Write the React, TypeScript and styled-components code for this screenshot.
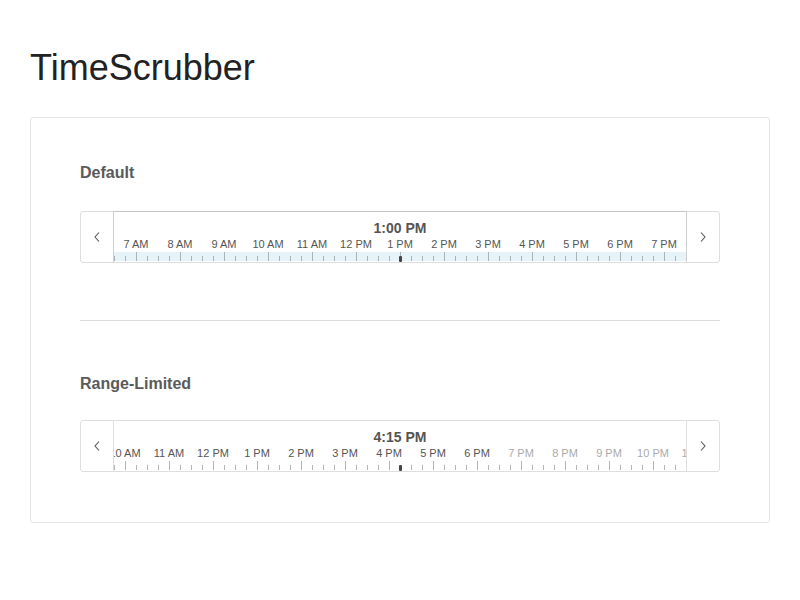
import React from "react";
import styled, {createGlobalStyle} from "styled-components";

const GlobalStyle = createGlobalStyle`
  body {
    margin: 0;
    background: #fff;
    font-family: "Liberation Sans", Arial, sans-serif;
  }
`;

const Page = styled.div`
  width: 800px;
  padding: 48px 30px 0 30px;
  box-sizing: border-box;
`;

const Title = styled.h1`
  margin: 0 0 29px 0;
  font-size: 36px;
  line-height: 40px;
  font-weight: 400;
  color: #222;
`;

const Card = styled.div`
  border: 1px solid #e6e6e6;
  border-radius: 3px;
  padding: 45px 49px 50px 49px;
  display: flex;
  flex-direction: column;
`;

interface SectionHeadingProps {
    $gap?: number;
}

const SectionHeading = styled.div<SectionHeadingProps>`
  font-size: 16px;
  line-height: 20px;
  font-weight: 700;
  color: #5a5a5a;
  margin-bottom: ${p => p.$gap ?? 28}px;
`;

const Divider = styled.div`
  height: 1px;
  background: #dcdcdc;
  margin: 57px 0 53px 0;
`;

const Scrubber = styled.div`
  display: flex;
  height: 52px;
  box-sizing: border-box;
  border: 1px solid #dedede;
  border-radius: 3px;
  background: #fff;
`;

const NavButton = styled.div`
  width: 32px;
  flex: none;
  display: flex;
  align-items: center;
  justify-content: center;
`;

interface TrackProps {
    $active?: boolean;
}

const Track = styled.div<TrackProps>`
  flex: 1;
  position: relative;
  overflow: hidden;
  display: flex;
  flex-direction: column;
  border-left: 1px solid ${p => p.$active ? "#cfcfcf" : "#dedede"};
  border-right: 1px solid ${p => p.$active ? "#cfcfcf" : "#dedede"};
  border-top: 1px solid ${p => p.$active ? "#c4c4c4" : "transparent"};
  margin-top: -1px;
`;

const CurrentTime = styled.div`
  padding-top: 8px;
  height: 16px;
  line-height: 16px;
  font-size: 14px;
  font-weight: 700;
  color: #555;
  text-align: center;
  white-space: nowrap;
`;

const Strip = styled.div`
  display: flex;
  flex: none;
`;

const HourCell = styled.div`
  width: 44px;
  flex: none;
  display: flex;
  flex-direction: column;
`;

interface HourLabelProps {
    $muted?: boolean;
}

const HourLabel = styled.div<HourLabelProps>`
  height: 14px;
  line-height: 14px;
  margin: 1px 0 1px 0;
  font-size: 11px;
  text-align: center;
  white-space: nowrap;
  color: ${p => p.$muted ? "#aaa" : "#555"};
`;

interface RulerProps {
    $band?: boolean;
}

const Ruler = styled.div<RulerProps>`
  height: 9px;
  display: flex;
  background: ${p => p.$band ? "#e6f3f8" : "transparent"};
`;

const TickSlot = styled.div`
  width: 11px;
  display: flex;
  align-items: flex-end;
`;

interface TickProps {
    $major?: boolean;
    $color: string;
}

const Tick = styled.div<TickProps>`
  width: 1px;
  height: ${p => p.$major ? 9 : 5}px;
  background: ${p => p.$color};
`;

const Marker = styled.div`
  position: absolute;
  bottom: 0;
  left: 50%;
  margin-left: -1px;
  width: 3px;
  height: 6px;
  background: #444;
  border-radius: 1px;
`;

const Chevron = ({dir}: {dir: "left" | "right"}) => (
    <svg width="8" height="12" viewBox="0 0 8 12">
        <polyline
            points={dir === "left" ? "6,1.5 2,6 6,10.5" : "2,1.5 6,6 2,10.5"}
            fill="none"
            stroke="#555"
            strokeWidth="1.1"
        />
    </svg>
);

const hourName = (h: number) => {
    const suffix = h < 12 ? "AM" : "PM";
    const n = h % 12 === 0 ? 12 : h % 12;
    return `${n} ${suffix}`;
};

const TRACK_WIDTH = 572;
const HOUR_PX = 44;

interface TimeScrubberProps {
    time: number;
    label: string;
    active?: boolean;
    maxHour?: number;
}

const TimeScrubber = ({time, label, active, maxHour}: TimeScrubberProps) => {
    // left edge of the 0h cell, so that `time` sits in the middle of the track
    const offset = TRACK_WIDTH / 2 - (time * HOUR_PX + HOUR_PX / 2);
    // only the hours that reach into the visible track
    const hours = Array.from({length: 24}, (_, i) => i)
        .filter(h => offset + h * HOUR_PX + HOUR_PX > 0 && offset + h * HOUR_PX < TRACK_WIDTH);
    const shift = offset + hours[0] * HOUR_PX;
    const tickColor = active ? "#a9b4b9" : "#b5b5b5";
    return (
        <Scrubber>
            <NavButton><Chevron dir="left"/></NavButton>
            <Track $active={active}>
                <CurrentTime>{label}</CurrentTime>
                <Strip style={{transform: `translateX(${shift}px)`}}>
                    {hours.map(h => (
                        <HourCell key={h}>
                            <HourLabel $muted={maxHour !== undefined && h > maxHour}>{hourName(h)}</HourLabel>
                            <Ruler $band={active}>
                                {[0, 1, 2, 3].map(i => (
                                    <TickSlot key={i}>
                                        <Tick $major={i === 2} $color={tickColor}/>
                                    </TickSlot>
                                ))}
                            </Ruler>
                        </HourCell>
                    ))}
                </Strip>
                <Marker/>
            </Track>
            <NavButton><Chevron dir="right"/></NavButton>
        </Scrubber>
    );
};

export default function App() {
    return (
        <Page>
            <GlobalStyle/>
            <Title>TimeScrubber</Title>
            <Card>
                <SectionHeading>Default</SectionHeading>
                <TimeScrubber time={13} label="1:00 PM" active/>
                <Divider/>
                <SectionHeading $gap={26}>Range-Limited</SectionHeading>
                <TimeScrubber time={16.25} label="4:15 PM" maxHour={18}/>
            </Card>
        </Page>
    );
}
